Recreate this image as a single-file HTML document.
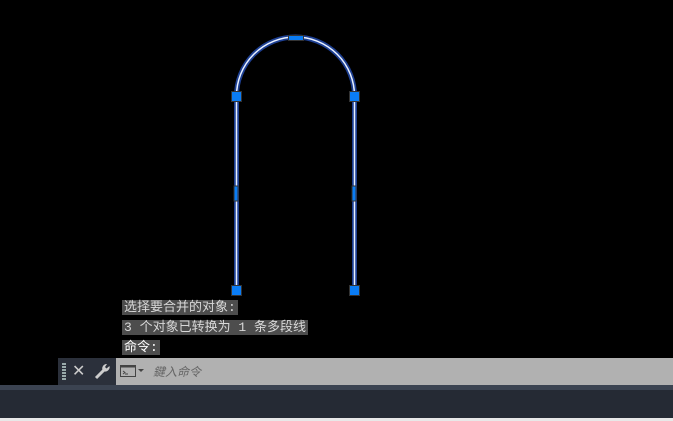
<!DOCTYPE html>
<html><head><meta charset="utf-8"><style>
body{margin:0;width:673px;height:421px;background:#000;overflow:hidden;position:relative;font-family:"Liberation Mono","Noto Sans CJK SC",monospace;}
.t{position:absolute;left:122px;height:15px;background:#4d4d4d;color:#d8d8d8;font-size:13px;line-height:15px;padding:0 2px;white-space:pre}
</style></head><body>
<svg width="673" height="421" style="position:absolute;left:0;top:0">
<g fill="none" stroke-linecap="butt">
<path d="M236.5 290 V96 A59 59 0 0 1 354.5 96 V290" stroke="#2a5ad0" stroke-width="5" opacity=".7"/>
<path d="M236.5 290 V96 A59 59 0 0 1 354.5 96 V290" stroke="#e8f0ff" stroke-width="1.5"/>
</g>
<g fill="#0a7cf5" stroke="#333" stroke-width="1">
<rect x="231.5" y="91.5" width="10" height="10"/>
<rect x="349.5" y="91.5" width="10" height="10"/>
<rect x="231.5" y="285.5" width="10" height="10"/>
<rect x="349.5" y="285.5" width="10" height="10"/>
<rect x="288.5" y="35.5" width="15" height="5"/>
<rect x="234" y="186" width="4" height="15"/>
<rect x="352" y="186" width="4" height="15"/>
</g>
</svg>
<div class="t" style="top:300px">选择要合并的对象:</div>
<div class="t" style="top:320px">3 个对象已转换为 1 条多段线</div>
<div class="t" style="top:340px;color:#fff">命令:</div>
<div style="position:absolute;left:58px;top:358px;width:58px;height:27px;background:#2b303b"></div>
<div style="position:absolute;left:62px;top:363px;width:4px;height:17px;background:repeating-linear-gradient(#9aa 0 2px,transparent 2px 3px)"></div>
<div style="position:absolute;left:72px;top:361px;color:#ccc;font-size:16px;font-family:'DejaVu Sans'">✕</div>
<svg style="position:absolute;left:93px;top:362px" width="18" height="18"><path d="M3 16 L11 8" stroke="#ccc" stroke-width="3" fill="none"/><path d="M10 9 A4.5 4.5 0 0 1 14 2 L12 5 L13.5 6.5 L16.5 4 A4.5 4.5 0 0 1 10 9z" fill="#ccc"/></svg>
<div style="position:absolute;left:116px;top:358px;width:557px;height:27px;background:#b1b1b1"></div>
<svg style="position:absolute;left:119px;top:364px" width="30" height="14"><rect x="1.5" y="1.5" width="15" height="11" fill="none" stroke="#444"/><rect x="1.5" y="1.5" width="15" height="2" fill="#444"/><path d="M4 7 l2 1.5 l-2 1.5 M6 10 h3" stroke="#444" fill="none"/><path d="M19 5 h6 l-3 3z" fill="#444"/></svg>
<div style="position:absolute;left:153px;top:363px;color:#666;font-size:12px;font-style:italic;font-family:'Liberation Sans','Noto Sans CJK SC',sans-serif">鍵入命令</div>
<div style="position:absolute;left:0;top:385px;width:673px;height:5px;background:#3b4351"></div>
<div style="position:absolute;left:0;top:390px;width:673px;height:28px;background:#252a34"></div>
<div style="position:absolute;left:0;top:418px;width:673px;height:3px;background:#e8e8e8"></div>
</body></html>
